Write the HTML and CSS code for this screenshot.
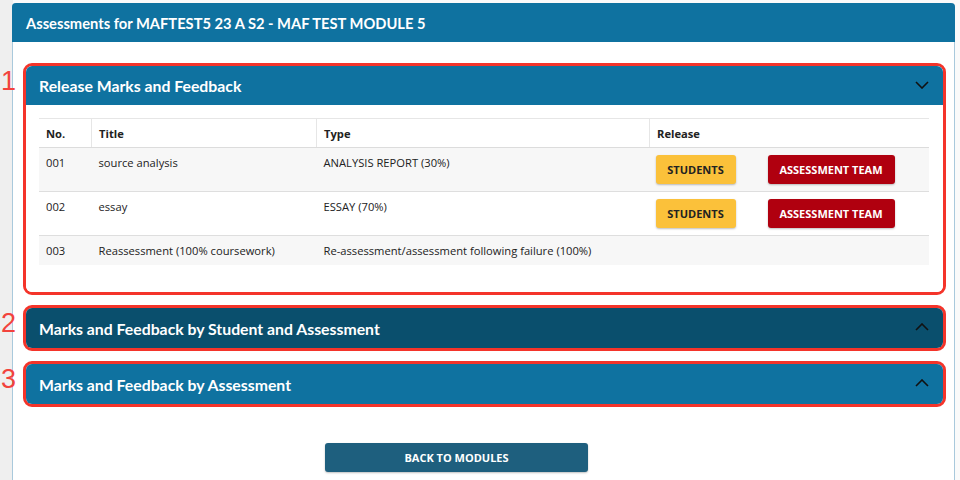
FILE: index.html
```html
<!DOCTYPE html>
<html lang="en">
<head>
<meta charset="utf-8">
<title>Assessments</title>
<link rel="stylesheet" href="styles.css">
</head>
<body>
<div class="card">
  <div class="card-head">Assessments for MAFTEST5 23 A S2 - MAF TEST MODULE 5</div>
  <div class="card-body">
    <div class="mark">
      <span class="num">1</span>
      <div class="panel">
        <div class="panel-head">
          <span>Release Marks and Feedback</span>
          <svg class="chev" width="14" height="8" viewBox="0 0 14 8"><path d="M1 1 L7 7 L13 1" fill="none" stroke="#111" stroke-width="1.6"/></svg>
        </div>
        <div class="panel-body">
          <table class="tbl">
            <thead>
              <tr><th class="c-no">No.</th><th class="c-title">Title</th><th class="c-type">Type</th><th class="c-rel">Release</th></tr>
            </thead>
            <tbody>
              <tr class="odd"><td>001</td><td>source analysis</td><td>ANALYSIS REPORT (30%)</td><td class="btns"><span class="btn yellow">STUDENTS</span><span class="btn red">ASSESSMENT TEAM</span></td></tr>
              <tr><td>002</td><td>essay</td><td>ESSAY (70%)</td><td class="btns"><span class="btn yellow">STUDENTS</span><span class="btn red">ASSESSMENT TEAM</span></td></tr>
              <tr class="odd short"><td>003</td><td>Reassessment (100% coursework)</td><td>Re-assessment/assessment following failure (100%)</td><td></td></tr>
            </tbody>
          </table>
        </div>
      </div>
    </div>
    <div class="mark">
      <span class="num">2</span>
      <div class="panel">
        <div class="panel-head dark solo">
          <span>Marks and Feedback by Student and Assessment</span>
          <svg class="chev" width="14" height="8" viewBox="0 0 14 8"><path d="M1 7 L7 1 L13 7" fill="none" stroke="#111" stroke-width="1.6"/></svg>
        </div>
      </div>
    </div>
    <div class="mark">
      <span class="num">3</span>
      <div class="panel">
        <div class="panel-head solo">
          <span>Marks and Feedback by Assessment</span>
          <svg class="chev" width="14" height="8" viewBox="0 0 14 8"><path d="M1 7 L7 1 L13 7" fill="none" stroke="#111" stroke-width="1.6"/></svg>
        </div>
      </div>
    </div>
    <div class="actions">
      <span class="back">BACK TO MODULES</span>
    </div>
  </div>
</div>
</body>
</html>
```
FILE: styles.css
```css
html, body {
  margin: 0;
  padding: 0;
}
body {
  background: linear-gradient(to right, #efefef 0, #efefef 13px, #fafafa 13px);
  font-family: "Open Sans", "Liberation Sans", sans-serif;
  height: 480px;
  overflow: hidden;
}
.card {
  margin: 3px 0 0 12px;
  width: 941px;
  border: 1px solid #a9c9dc;
  border-top: none;
  border-radius: 4px 4px 0 0;
  background: #fff;
  min-height: 480px;
}
.card-head {
  background: #0f72a0;
  color: #fff;
  font-family: "Lato", sans-serif;
  font-weight: 700;
  font-size: 14.7px;
  height: 39px;
  line-height: 40px;
  padding-left: 14px;
  border-radius: 4px 4px 0 0;
  margin: 0 -1px;
}
.card-body {
  padding: 21px 8px 0 10px;
  display: flex;
  flex-direction: column;
  gap: 10px;
}
.mark {
  position: relative;
  border: 3px solid #f4342a;
  border-radius: 9px;
}
.num {
  position: absolute;
  left: -25px;
  top: 0;
  color: #f2433d;
  font-family: "Liberation Sans", sans-serif;
  font-weight: 400;
  font-size: 27px;
  line-height: 30px;
}
.panel {
  border-radius: 6px;
  overflow: hidden;
  background: #fff;
}
.panel-head {
  background: #0f72a0;
  color: #fff;
  font-family: "Lato", sans-serif;
  font-weight: 700;
  font-size: 15.8px;
  height: 39px;
  display: flex;
  align-items: center;
  justify-content: space-between;
  padding: 0 14px 0 13px;
}
.panel-head.solo {
  height: 40px;
}
.panel-head.dark {
  background: #0a4f6d;
}
.chev {
  display: block;
  margin-top: -2px;
}
.panel-body {
  padding: 13px 14px 27px 13px;
}
.tbl {
  width: 100%;
  border-collapse: collapse;
  font-size: 11.2px;
  color: #222;
}
.tbl th {
  text-align: left;
  font-weight: 700;
  height: 28px;
  padding: 0 7px;
  border-top: 1px solid #e6e6e6;
  border-bottom: 1px solid #dcdcdc;
  border-left: 1px solid #e6e6e6;
}
.tbl th:first-child { border-left: none; }
.c-no { width: 38px; }
.c-title { width: 210px; }
.c-type { width: 318px; }
.tbl td {
  vertical-align: top;
  padding: 7px 7px 0;
  height: 36px;
  border-bottom: 1px solid #dedede;
}
.tbl tr.odd td { background: #f7f7f7; }
.tbl tr.short td {
  height: 22px;
  border-bottom: none;
}
.tbl td.btns {
  padding: 7px 6px 0;
  white-space: nowrap;
}
.btn {
  display: inline-flex;
  align-items: center;
  justify-content: center;
  height: 29px;
  border-radius: 3px;
  font-weight: 700;
  font-size: 11px;
  box-shadow: 0 1px 2px rgba(0,0,0,0.25);
  vertical-align: top;
}
.btn.yellow {
  width: 80px;
  background: #fbc13a;
  color: #222;
}
.btn.red {
  width: 127px;
  margin-left: 32px;
  background: #b0000f;
  color: #fff;
}
.actions {
  padding: 26px 0 0 302px;
}
.back {
  display: flex;
  align-items: center;
  justify-content: center;
  width: 263px;
  height: 29px;
  background: #1e5f7e;
  color: #fff;
  font-weight: 700;
  font-size: 11px;
  border-radius: 3px;
  box-shadow: 0 1px 2px rgba(0,0,0,0.25);
}
```
